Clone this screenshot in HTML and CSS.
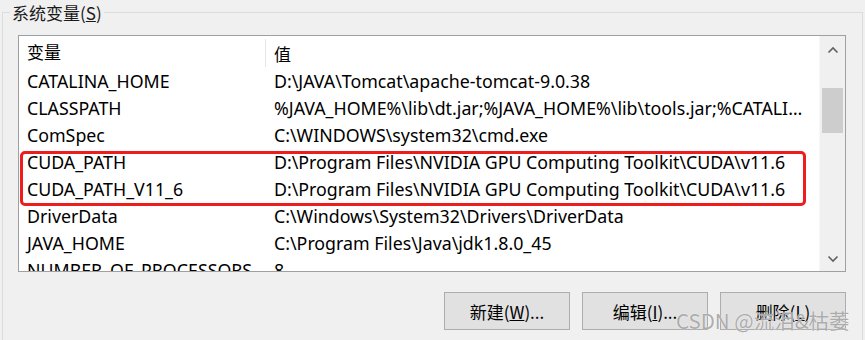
FILE: index.html
```html
<!DOCTYPE html>
<html lang="zh-CN">
<head>
  <meta charset="UTF-8">
  <title>系统变量</title>
  <link rel="stylesheet" href="styles.css">
</head>
<body>

<fieldset class="group">
  <legend>系统变量(<u>S</u>)</legend>

  <div class="list-box">
    <div class="list">
      <div class="list-header">
        <div class="col-name">变量</div>
        <div class="col-value">值</div>
      </div>
      <div class="row"><div class="col-name">CATALINA_HOME</div><div class="col-value">D:\JAVA\Tomcat\apache-tomcat-9.0.38</div></div>
      <div class="row"><div class="col-name">CLASSPATH</div><div class="col-value">%JAVA_HOME%\lib\dt.jar;%JAVA_HOME%\lib\tools.jar;%CATALINA_HOME%\lib\servlet-api.jar</div></div>
      <div class="row"><div class="col-name">ComSpec</div><div class="col-value">C:\WINDOWS\system32\cmd.exe</div></div>
      <div class="row"><div class="col-name">CUDA_PATH</div><div class="col-value">D:\Program Files\NVIDIA GPU Computing Toolkit\CUDA\v11.6</div></div>
      <div class="row"><div class="col-name">CUDA_PATH_V11_6</div><div class="col-value">D:\Program Files\NVIDIA GPU Computing Toolkit\CUDA\v11.6</div></div>
      <div class="row"><div class="col-name">DriverData</div><div class="col-value">C:\Windows\System32\Drivers\DriverData</div></div>
      <div class="row"><div class="col-name">JAVA_HOME</div><div class="col-value">C:\Program Files\Java\jdk1.8.0_45</div></div>
      <div class="row"><div class="col-name">NUMBER_OF_PROCESSORS</div><div class="col-value">8</div></div>

      <!-- highlight drawn on top of the two CUDA rows -->
      <div class="mark"></div>
    </div>

    <div class="scrollbar">
      <svg class="arrow" width="12" height="8" viewBox="0 0 12 8"><path d="M1.5 6.5 L6 2 L10.5 6.5" fill="none" stroke="#606060" stroke-width="1.6"/></svg>
      <div class="track"><div class="thumb"></div></div>
      <svg class="arrow" width="12" height="8" viewBox="0 0 12 8"><path d="M1.5 1.5 L6 6 L10.5 1.5" fill="none" stroke="#606060" stroke-width="1.6"/></svg>
    </div>
  </div>

  <div class="buttons">
    <button class="btn">新建(<u>W</u>)...</button>
    <button class="btn">编辑(<u>I</u>)...</button>
    <button class="btn">删除(<u>L</u>)</button>
  </div>
</fieldset>

<div class="watermark">CSDN @流泪&amp;枯萎</div>

</body>
</html>
```

FILE: styles.css
```css
body {
  margin: 0;
  background-color: #f0f0f0;
  font-family: "Noto Sans", "Noto Sans CJK SC", sans-serif;
  font-size: 17.8px;
  color: #000;
  overflow: hidden;
}

/* Group box */
.group {
  margin: 0 2px 0 2px;
  padding: 0 15px 20px 15px;
  border: 1px solid #dcdcdc;
  min-width: 0;
}

.group legend {
  margin-left: -8px;
  padding: 0 2px;
  font-family: "Noto Sans CJK SC", sans-serif;
  font-size: 17px;
  line-height: 25px;
  color: #1a1a1a;
}

/* List view */
.list-box {
  margin-top: 10px;
  width: 826px;
  height: 235px;
  border: 1px solid #a0a0a0;
  background: #fff;
  display: flex;
  overflow: hidden;
}

.list {
  position: relative;
  flex: 1;
  min-width: 0;
}

.list-header,
.row {
  display: flex;
  align-items: center;
  white-space: nowrap;
}

.list-header {
  height: 31px;
  font-family: "Noto Sans CJK SC", sans-serif;
  font-size: 17px;
}

.row {
  height: 27px;
}

.col-name {
  width: 239px;
  padding-left: 8px;
  flex-shrink: 0;
}

.col-value {
  flex: 1;
  min-width: 0;
  padding-left: 8px;
  padding-right: 8px;
  overflow: hidden;
  text-overflow: ellipsis;
}

.list-header .col-value {
  border-left: 1px solid #e5e5e5;
  align-self: stretch;
  display: flex;
  align-items: center;
  margin-top: 3px;
  padding-left: 8px;
}

.list-header .col-name {
  width: 238px;
}

.mark {
  position: absolute;
  left: 1px;
  top: 115px;
  width: 780px;
  height: 49px;
  border: 3px solid #ee1c1c;
  border-radius: 5px;
}

/* Scrollbar */
.scrollbar {
  width: 25px;
  background: #f0f0f0;
  display: flex;
  flex-direction: column;
  align-items: center;
  padding: 10px 0 8px;
  border-left: 1px solid #f7f7f7;
}

.scrollbar .track {
  flex: 1;
  width: 100%;
  padding-top: 34px;
  box-sizing: border-box;
}

.scrollbar .thumb {
  margin: 0 2px;
  height: 45px;
  background: #cdcdcd;
}

/* Buttons */
.buttons {
  display: flex;
  justify-content: flex-end;
  gap: 12px;
  width: 828px;
  margin-top: 20px;
}

.btn {
  width: 126px;
  height: 38px;
  background: #e1e1e1;
  border: 1px solid #adadad;
  font-family: "Noto Sans CJK SC", sans-serif;
  font-size: 17px;
  color: #000;
  padding: 0;
}

.watermark {
  position: absolute;
  left: 676px;
  top: 305px;
  font-family: "Noto Sans CJK SC", sans-serif;
  font-size: 20.5px;
  color: rgba(150, 150, 150, 0.8);
  text-shadow: 0 0 1px #fff;
}
```
